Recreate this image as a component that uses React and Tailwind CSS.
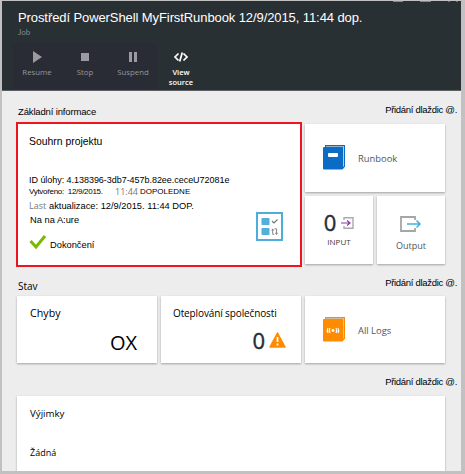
import React from 'react';

const SANS = "font-['Liberation_Sans',sans-serif]";
const HUMAN = "font-['Open_Sans',sans-serif]";

function Line({ className = '', children }) {
  return <div className={`whitespace-nowrap ${className}`}>{children}</div>;
}

function Tile({ className = '', children }) {
  return <div className={`bg-white shadow-[0_1px_2px_rgba(0,0,0,0.32)] ${className}`}>{children}</div>;
}

function ToolButton({ icon, label, active }) {
  return (
    <div className={`flex w-12 flex-col items-center ${HUMAN} leading-[10px] ${active ? 'text-[7.5px] font-semibold text-white' : 'text-[7.8px] text-[#94979a]'}`}>
      <svg className="mb-[4px] h-3 w-4" viewBox="0 0 16 12">{icon}</svg>
      <div className="text-center">{label}</div>
    </div>
  );
}

function AddTiles() {
  return <Line className="text-[9.5px] leading-3 tracking-[-0.3px]">Přidání dlaždic @.</Line>;
}

function Zero({ className = '' }) {
  return <span className={`${HUMAN} text-[22px] leading-[26px] text-[#272c34] [-webkit-text-stroke:0.4px_#272c34] ${className}`}>0</span>;
}

function Book({ color, children }) {
  return (
    <svg className="h-[25px] w-[23px]" viewBox="0 0 23 25">
      <path d="M2 0H22V21.5L20 24H2Z" fill={color} />
      <path d="M3 1.2H21V21L20 22V2.5H3Z" fill="#c7c9cb" />
      <rect y="2" width="20" height="22.5" rx="1" fill={color} />
      {children}
    </svg>
  );
}

export default function App() {
  return (
    <div className={`h-[474px] w-[465px] overflow-hidden border-t border-r-4 border-b-[3px] border-l-2 border-[#c1c1c1] bg-[#ededed] text-black ${SANS}`}>
      <header className="h-[90px] border-b border-[#5b5f62] bg-[#293034] pl-4">
        <div className="flex h-[8px] items-start justify-end gap-[17px] pr-[3px]">
          <div className="h-px w-[10px] bg-[#85898b]" />
          <div className="h-px w-[11px] bg-[#85898b]" />
          <div className="flex w-[10px] justify-between">
            <div className="h-px w-[2px] bg-[#696e71]" />
            <div className="h-px w-[2px] bg-[#696e71]" />
          </div>
        </div>
        <Line className="text-[13px] leading-[17px] tracking-[-0.09px] text-white">Prostředí PowerShell MyFirstRunbook 12/9/2015, 11:44 dop.</Line>
        <Line className="mt-[1px] font-['Lato',sans-serif] text-[8px] leading-[10px] text-[#858a8e]">Job</Line>
        <div className="-ml-[5px] mt-[6px] flex">
          <div className="flex h-[46px] bg-[#292c34] pt-[8px]">
            <ToolButton label="Resume" icon={<path d="M4 0L13 6L4 12Z" fill="#999b9e" />} />
            <ToolButton label="Stop" icon={<path d="M4 2H12V10H4Z" fill="#999b9e" />} />
            <ToolButton label="Suspend" icon={<path d="M4 1H7V11H4ZM9 1H12V11H9Z" fill="#999b9e" />} />
          </div>
          <div className="pt-[8px]">
            <ToolButton active label={<>View<br />source</>} icon={<path d="M5.5 2.5L2 6L5.5 9.5M10.5 2.5L14 6L10.5 9.5M9.3 1.5L6.7 10.5" fill="none" stroke="#fff" strokeWidth="1.7" />} />
          </div>
        </div>
      </header>

      <div className="flex h-[31px] justify-between pr-[4px] pl-4">
        <Line className="mt-[15px] text-[9.5px] leading-3 tracking-[-0.15px]">Základní informace</Line>
        <div className="mt-[13px]"><AddTiles /></div>
      </div>

      <div className="flex h-[144px] pl-[14px]">
        <div className="flex h-[145px] w-[286px] justify-between border-2 border-[#ee1520] bg-white pr-[17px] pl-[11px]">
          <div>
            <Line className="mt-[11px] text-[10.4px] leading-[14px]">Souhrn projektu</Line>
            <Line className="mt-[25px] text-[9px] leading-3 tracking-[-0.04px]">ID úlohy: 4.138396-3db7-457b.82ee.ceceU72081e</Line>
            <div className="flex items-center text-[8px] leading-3">
              <Line className="w-[86px] tracking-[-0.3px]">Vytvořeno:&nbsp; 12/9/2015.</Line>
              <Line className={`${HUMAN} w-[25px] text-[9px] text-[#777]`}>11:44</Line>
              <Line>DOPOLEDNE</Line>
            </div>
            <div className="mt-[1px] flex text-[9.3px] leading-[15px]">
              <Line className={`${HUMAN} w-[20px] text-[9px] leading-[14px] text-[#777]`}>Last</Line>
              <Line>aktualizace: 12/9/2015. 11:44 DOP.</Line>
            </div>
            <Line className="pl-px text-[9.3px] leading-3">Na na A:ure</Line>
            <div className="mt-[8px] flex">
              <svg className="h-4 w-[21px]" viewBox="0 0 21 16"><path d="M1.5 7L7 13L16 2" fill="none" stroke="#7cb800" strokeWidth="3" /></svg>
              <Line className="mt-[5px] text-[9.3px] leading-3">Dokončení</Line>
            </div>
          </div>
          <svg className="mt-[88px] h-[29px] w-[27px] shrink-0" viewBox="0 0 27 29">
            <rect x="1" y="1" width="25" height="27" fill="#fff" stroke="#4eaed9" strokeWidth="2" />
            <rect x="5.5" y="6" width="8" height="7" rx=".7" fill="#54b0da" />
            <rect x="5.5" y="16" width="8" height="7" rx=".7" fill="#54b0da" />
            <path d="M16 9L18 11L21.5 7.5" fill="none" stroke="#777" strokeWidth="1.2" />
            <path d="M18.3 22.3H16.7V17.5M18.5 16.8H20.5V21.5" fill="none" stroke="#888" />
            <path d="M15 18.6L16.7 16.4L18.4 18.6ZM18.8 20.8L20.5 23L22.2 20.8Z" fill="#888" />
          </svg>
        </div>
        <div className="mt-[2px] ml-[3px] grid h-[140px] w-[140px] grid-cols-2 grid-rows-2 gap-x-1 gap-y-[4px]">
          <Tile className="col-span-2 flex pl-[18px]">
            <div className="mt-[21px]"><Book color="#0b6cc5"><rect x="5" y="8" width="10" height="4" rx="1" fill="#fff" /></Book></div>
            <Line className={`${HUMAN} mt-[28px] ml-[12px] text-[9.4px] leading-[14px] text-[#50555a]`}>Runbook</Line>
          </Tile>
          <Tile className="flex flex-col items-center">
            <div className="mt-[14px] flex h-[26px] items-center gap-[5px]">
              <Zero className="-mt-[3px]" />
              <svg className="h-3 w-[13px]" viewBox="0 0 13 12"><path d="M3 3V.7H12V11.3H3V9" fill="none" stroke="#aaa" strokeWidth="1.4" /><path d="M0 6H9M6 3.5L9 6L6 8.5" fill="none" stroke="#8a3aa5" strokeWidth="1.2" /></svg>
            </div>
            <Line className={`${HUMAN} text-[8px] leading-[12px] text-[#373c43]`}>INPUT</Line>
          </Tile>
          <Tile className="flex flex-col items-center">
            <svg className="mt-[20px] h-4 w-[22px]" viewBox="0 0 22 16"><path d="M15 4V1H1V15H15V12" fill="none" stroke="#a5a5a5" strokeWidth="1.8" /><path d="M7 8H20M16.5 4.5L20 8L16.5 11.5" fill="none" stroke="#45b0db" strokeWidth="1.5" /></svg>
            <Line className={`${HUMAN} mt-[7px] text-[9px] leading-[13px] text-[#50555a]`}>Output</Line>
          </Tile>
        </div>
      </div>

      <div className="flex h-[30px] justify-between pr-[4px] pl-4">
        <Line className={`${HUMAN} mt-[14px] text-[10px] leading-3`}>Stav</Line>
        <div className="mt-[11px]"><AddTiles /></div>
      </div>

      <div className="ml-[15px] grid h-[67px] w-[428px] grid-cols-3 gap-1">
        <Tile className="flex flex-col pr-[20px] pl-[13px]">
          <Line className={`${HUMAN} mt-[10px] text-[10.7px] leading-[14px]`}>Chyby</Line>
          <Line className={`${HUMAN} mt-[11px] self-end text-[20px] leading-6`}>OX</Line>
        </Tile>
        <Tile className="flex flex-col pr-[15px] pl-[12px]">
          <Line className={`${HUMAN} mt-[10px] text-[10px] leading-[14px] tracking-[-0.12px]`}>Oteplování společnosti</Line>
          <div className="mt-[7px] flex items-center gap-[4px] self-end">
            <Zero />
            <svg className="h-4 w-[17px]" viewBox="0 0 17 16"><path d="M8.5 1L16 15H1Z" fill="#ff8c00" stroke="#ff8c00" strokeLinejoin="round" strokeWidth="1.5" /><path d="M8.5 5V10M8.5 11.5V13.5" stroke="#fff" strokeWidth="1.7" /></svg>
          </div>
        </Tile>
        <Tile className="flex pl-[18px]">
          <div className="mt-[21px]"><Book color="#ff8c00"><circle cx="10" cy="13.5" r="1.4" fill="#fff" /><path d="M7 11Q5.5 13.5 7 16M5 11Q3.5 13.5 5 16M13 11Q14.5 13.5 13 16M15 11Q16.5 13.5 15 16" fill="none" stroke="#fff" strokeWidth="1.1" /></Book></div>
          <Line className={`${HUMAN} mt-[28px] ml-[12px] text-[9.4px] leading-[14px] text-[#50555a]`}>All Logs</Line>
        </Tile>
      </div>

      <div className="flex h-[33px] justify-end pr-[4px]">
        <div className="mt-[13px]"><AddTiles /></div>
      </div>
      <Tile className="ml-[15px] h-[80px] w-[428px] pl-[13px]">
        <Line className={`${HUMAN} pt-[11px] text-[9.7px] leading-[14px]`}>Výjimky</Line>
        <Line className={`${HUMAN} mt-[25px] text-[9px] leading-[14px]`}>Žádná</Line>
      </Tile>
    </div>
  );
}
